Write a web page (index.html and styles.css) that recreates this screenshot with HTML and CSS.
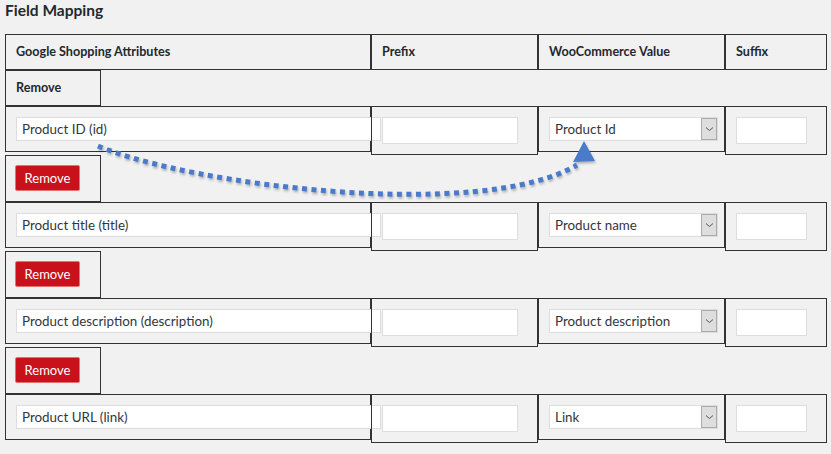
FILE: index.html
```html
<!DOCTYPE html>
<html lang="en">
<head>
    <meta charset="UTF-8">
    <meta name="viewport" content="width=device-width, initial-scale=1.0">
    <title>Field Mapping</title>
    <link rel="stylesheet" href="styles.css">
</head>
<body>
    <div class="page">
        <h2 class="section-title">Field Mapping</h2>
        <div class="mapping">
            <div class="map-row map-head">
                <div class="cell col-attr">Google Shopping Attributes</div>
                <div class="cell col-prefix">Prefix</div>
                <div class="cell col-value">WooCommerce Value</div>
                <div class="cell col-suffix">Suffix</div>
                <div class="cell col-remove">Remove</div>
            </div>
            <div class="map-row">
                <div class="cell col-attr"><input class="text-input attr-input" type="text" value="Product ID (id)"></div>
                <div class="cell col-prefix"><input class="text-input prefix-input" type="text"></div>
                <div class="cell col-value">
                    <div class="select-wrap">
                        <select class="value-select"><option>Product Id</option></select>
                        <span class="select-arrow"><svg width="9" height="6" viewBox="0 0 9 6"><path d="M1 1.5 L4.5 4.5 L8 1.5" fill="none" stroke="#555" stroke-width="1"/></svg></span>
                    </div>
                </div>
                <div class="cell col-suffix"><input class="text-input suffix-input" type="text"></div>
                <div class="cell col-remove"><button class="remove-button">Remove</button></div>
            </div>
            <div class="map-row">
                <div class="cell col-attr"><input class="text-input attr-input" type="text" value="Product title (title)"></div>
                <div class="cell col-prefix"><input class="text-input prefix-input" type="text"></div>
                <div class="cell col-value">
                    <div class="select-wrap">
                        <select class="value-select"><option>Product name</option></select>
                        <span class="select-arrow"><svg width="9" height="6" viewBox="0 0 9 6"><path d="M1 1.5 L4.5 4.5 L8 1.5" fill="none" stroke="#555" stroke-width="1"/></svg></span>
                    </div>
                </div>
                <div class="cell col-suffix"><input class="text-input suffix-input" type="text"></div>
                <div class="cell col-remove"><button class="remove-button">Remove</button></div>
            </div>
            <div class="map-row">
                <div class="cell col-attr"><input class="text-input attr-input" type="text" value="Product description (description)"></div>
                <div class="cell col-prefix"><input class="text-input prefix-input" type="text"></div>
                <div class="cell col-value">
                    <div class="select-wrap">
                        <select class="value-select"><option>Product description</option></select>
                        <span class="select-arrow"><svg width="9" height="6" viewBox="0 0 9 6"><path d="M1 1.5 L4.5 4.5 L8 1.5" fill="none" stroke="#555" stroke-width="1"/></svg></span>
                    </div>
                </div>
                <div class="cell col-suffix"><input class="text-input suffix-input" type="text"></div>
                <div class="cell col-remove"><button class="remove-button">Remove</button></div>
            </div>
            <div class="map-row">
                <div class="cell col-attr"><input class="text-input attr-input" type="text" value="Product URL (link)"></div>
                <div class="cell col-prefix"><input class="text-input prefix-input" type="text"></div>
                <div class="cell col-value">
                    <div class="select-wrap">
                        <select class="value-select"><option>Link</option></select>
                        <span class="select-arrow"><svg width="9" height="6" viewBox="0 0 9 6"><path d="M1 1.5 L4.5 4.5 L8 1.5" fill="none" stroke="#555" stroke-width="1"/></svg></span>
                    </div>
                </div>
                <div class="cell col-suffix"><input class="text-input suffix-input" type="text"></div>
            </div>
        </div>

        <!-- annotation: attribute maps to the value column -->
        <svg class="hint-arrow" width="831" height="454" viewBox="0 0 831 454">
            <path d="M98 146 C 190 185, 480 222, 577 165" fill="none" stroke="#4a7bcb" stroke-width="5" stroke-dasharray="5 4.5"/>
            <polygon points="584,141 573,162 595,161" fill="#4a7bcb"/>
        </svg>
    </div>
</body>
</html>
```

FILE: styles.css
```css
body {
    margin: 0;
    padding: 0 4px 0 5px;
    background-color: #f1f1f1;
    color: #23282d;
    font-family: Lato, "Open Sans", sans-serif;
}
.page {
    position: relative;
}
.section-title {
    margin: 0;
    padding-top: 1px;
    height: 33px;
    font-size: 15.5px;
    line-height: 18px;
    font-weight: 700;
}
.map-row {
    display: flex;
    flex-wrap: wrap;
    align-items: flex-start;
    width: 822px;
}
.cell {
    box-sizing: border-box;
    border: 1px solid #333;
    padding: 10px;
}
.map-head .cell {
    font-size: 12.6px;
    line-height: 14px;
    font-weight: 700;
}
.col-attr {
    width: 366px;
}
.col-prefix {
    width: 167px;
}
.col-value {
    width: 187px;
}
.col-suffix {
    width: 102px;
}
.col-remove {
    width: 96px;
}
.map-row .col-remove {
    padding: 9px 9px 10px;
}
.map-head .col-remove {
    padding: 10px;
}
.text-input {
    display: block;
    box-sizing: border-box;
    margin: 0;
    padding: 0 5px;
    border: 1px solid #ddd;
    background-color: #fff;
    color: #32373c;
    font-family: inherit;
    font-size: 13.4px;
    outline: none;
}
.attr-input {
    width: 365px;
    height: 24px;
}
.prefix-input {
    width: 136px;
    height: 27px;
}
.suffix-input {
    width: 71px;
    height: 27px;
}
.select-wrap {
    position: relative;
    width: 169px;
    height: 24px;
}
.value-select {
    -webkit-appearance: none;
    appearance: none;
    display: block;
    box-sizing: border-box;
    width: 169px;
    height: 24px;
    margin: 0;
    padding: 0 5px;
    border: 1px solid #ddd;
    border-radius: 0;
    background-color: #fff;
    color: #32373c;
    font-family: inherit;
    font-size: 13.4px;
}
.select-arrow {
    position: absolute;
    top: 1px;
    right: 1px;
    width: 16px;
    height: 22px;
    box-sizing: border-box;
    border: 1px solid #ababab;
    background-color: #dedede;
    display: flex;
    align-items: center;
    justify-content: center;
}
.remove-button {
    display: block;
    width: 65px;
    height: 26px;
    padding: 0;
    border: 1px solid #e8706f;
    border-radius: 2px;
    background-color: #c8111a;
    color: #fff;
    font-family: inherit;
    font-size: 13px;
    cursor: pointer;
}
.hint-arrow {
    position: absolute;
    left: -5px;
    top: 0;
    pointer-events: none;
    filter: drop-shadow(1px 2px 1px rgba(0, 0, 0, 0.25));
}
```
